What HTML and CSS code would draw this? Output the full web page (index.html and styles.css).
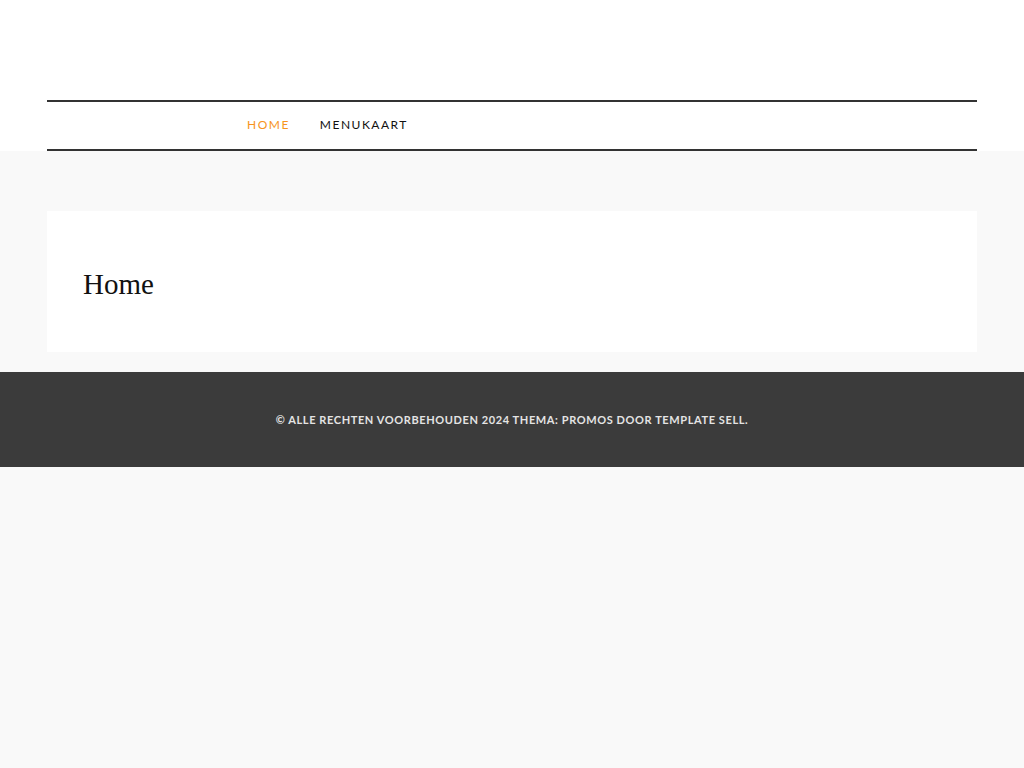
FILE: index.html
```html
<!DOCTYPE html>
<html lang="nl">
<head>
<meta charset="utf-8">
<title>Home</title>
<link rel="stylesheet" href="styles.css">
</head>
<body>
<header class="site-header">
  <div class="container">
    <nav class="main-nav">
      <ul class="menu">
        <li><a class="active" href="#">Home</a></li>
        <li><a href="#">Menukaart</a></li>
      </ul>
    </nav>
  </div>
</header>
<main class="site-main">
  <div class="container">
    <article class="card">
      <h1 class="page-title">Home</h1>
    </article>
  </div>
</main>
<footer class="site-footer">
  <p>© Alle rechten voorbehouden 2024 Thema: Promos door Template Sell.</p>
</footer>
</body>
</html>
```
FILE: styles.css
```css
html, body {
  margin: 0;
  padding: 0;
  background: #f9f9f9;
  font-family: Lato, "Liberation Sans", sans-serif;
}
.container {
  width: 930px;
  margin: 0 auto;
}
.site-header {
  background: #fff;
  padding-top: 100px;
}
.main-nav {
  border-top: 2px solid #333;
  border-bottom: 2px solid #333;
  height: 47px;
  box-sizing: content-box;
}
.menu {
  list-style: none;
  margin: 0;
  padding: 16px 0 0 200px;
  display: flex;
  gap: 30px;
  align-items: flex-start;
}
.menu a {
  display: block;
  line-height: 14px;
  text-decoration: none;
  color: #111;
  font-size: 12px;
  letter-spacing: 1.5px;
  text-transform: uppercase;
  font-weight: 400;
}
.menu a.active {
  color: #f7941d;
}
.site-main {
  padding: 60px 0 20px;
}
.card {
  background: #fff;
  height: 141px;
  padding: 0 36px;
  display: flex;
  align-items: center;
}
.page-title {
  margin: 6px 0 0;
  font-family: "Liberation Serif", serif;
  font-weight: 400;
  font-size: 29px;
  color: #111;
}
.site-footer {
  background: #3b3b3b;
  height: 95px;
  display: flex;
  align-items: center;
  justify-content: center;
}
.site-footer p {
  margin: 0;
  color: #e4e4e4;
  font-size: 11px;
  font-weight: 700;
  letter-spacing: 0.6px;
  text-transform: uppercase;
}
```
